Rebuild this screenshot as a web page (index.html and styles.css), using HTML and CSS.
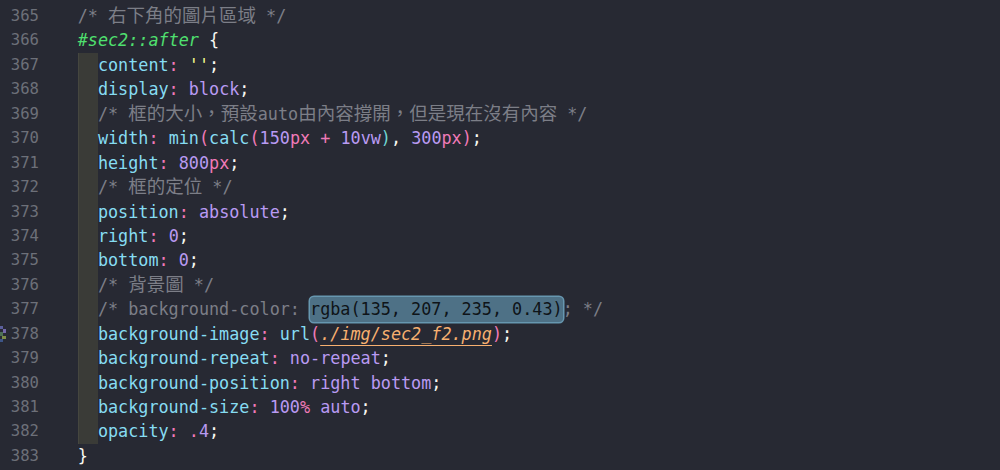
FILE: index.html
```html
<!DOCTYPE html>
<html lang="zh-Hant">
<head>
<meta charset="utf-8">
<title>styles.css</title>
<link rel="stylesheet" href="styles.css">
</head>
<body>
<div class="editor">
  <div class="gutter">
    <div class="ln">365</div>
    <div class="ln">366</div>
    <div class="ln">367</div>
    <div class="ln">368</div>
    <div class="ln">369</div>
    <div class="ln">370</div>
    <div class="ln">371</div>
    <div class="ln">372</div>
    <div class="ln">373</div>
    <div class="ln">374</div>
    <div class="ln">375</div>
    <div class="ln">376</div>
    <div class="ln">377</div>
    <div class="ln marked">
      <svg class="mark" width="6" height="20" viewBox="0 0 6 20"><rect x="0" y="2" width="3" height="3" fill="#5b5f9c"/><rect x="3" y="5" width="3" height="4" fill="#7468ac"/><rect x="0" y="8" width="3" height="4" fill="#4d6f55"/><rect x="2" y="12" width="4" height="3" fill="#7d8c48"/><rect x="0" y="15" width="3" height="3" fill="#3d5588"/></svg>
      378
    </div>
    <div class="ln">379</div>
    <div class="ln">380</div>
    <div class="ln">381</div>
    <div class="ln">382</div>
    <div class="ln">383</div>
  </div>
  <div class="code">
    <div class="line"><span class="c">/* <span class="cj">右下角的圖片區域</span> */</span></div>
    <div class="line"><span class="sel">#sec2</span><span class="o sel">::</span><span class="sel">after</span> <span class="t">{</span></div>
    <div class="block">
      <div class="guide"></div>
      <div class="lines">
        <div class="line"><span class="p">content</span><span class="o">:</span> <span class="s">''</span><span class="t">;</span></div>
        <div class="line"><span class="p">display</span><span class="o">:</span> <span class="k">block</span><span class="t">;</span></div>
        <div class="line"><span class="c">/* <span class="cj">框的大小，預設</span>auto<span class="cj">由內容撐開，但是現在沒有內容</span> */</span></div>
        <div class="line"><span class="p">width</span><span class="o">:</span> <span class="p">min</span><span class="o">(</span><span class="p">calc</span><span class="o">(</span><span class="k">150</span><span class="o">px</span> <span class="o">+</span> <span class="k">10vw</span><span class="b2">)</span><span class="t">,</span> <span class="k">300</span><span class="o">px</span><span class="o">)</span><span class="t">;</span></div>
        <div class="line"><span class="p">height</span><span class="o">:</span> <span class="k">800</span><span class="o">px</span><span class="t">;</span></div>
        <div class="line"><span class="c">/* <span class="cj">框的定位</span> */</span></div>
        <div class="line"><span class="p">position</span><span class="o">:</span> <span class="k">absolute</span><span class="t">;</span></div>
        <div class="line"><span class="p">right</span><span class="o">:</span> <span class="k">0</span><span class="t">;</span></div>
        <div class="line"><span class="p">bottom</span><span class="o">:</span> <span class="k">0</span><span class="t">;</span></div>
        <div class="line"><span class="c">/* <span class="cj">背景圖</span> */</span></div>
        <div class="line"><span class="c">/* background-color: <span class="hl">rgba(135, 207, 235, 0.43)</span>; */</span></div>
        <div class="line"><span class="p">background-image</span><span class="o">:</span> <span class="p">url</span><span class="o">(</span><span class="url">./img/sec2_f2.png</span><span class="o">)</span><span class="t">;</span></div>
        <div class="line"><span class="p">background-repeat</span><span class="o">:</span> <span class="k">no-repeat</span><span class="t">;</span></div>
        <div class="line"><span class="p">background-position</span><span class="o">:</span> <span class="k">right bottom</span><span class="t">;</span></div>
        <div class="line"><span class="p">background-size</span><span class="o">:</span> <span class="k">100</span><span class="o">%</span> <span class="k">auto</span><span class="t">;</span></div>
        <div class="line"><span class="p">opacity</span><span class="o">:</span> <span class="o">.</span><span class="k">4</span><span class="t">;</span></div>
      </div>
    </div>
    <div class="line"><span class="t">}</span></div>
  </div>
</div>
</body>
</html>
```

FILE: styles.css
```css
html, body {
  margin: 0;
  padding: 0;
  background: #272933;
}

.editor {
  display: flex;
  width: 1000px;
  height: 470px;
  overflow: hidden;
  padding-top: 4px;
  box-sizing: border-box;
  background: #272933;
  font-family: "DejaVu Sans Mono", "Liberation Mono", "Noto Sans CJK TC", monospace;
  font-size: 16.8px;
  color: #f8f8f2;
}

.gutter {
  width: 39px;
  margin-right: 38.7px;
  flex: none;
}

.ln {
  height: 24.44px;
  line-height: 24.44px;
  text-align: right;
  font-size: 15.6px;
  color: #6d7079;
  position: relative;
}

.mark {
  position: absolute;
  left: 0;
  top: 2px;
}

.code {
  flex: 1;
  min-width: 0;
}

.line {
  height: 24.44px;
  line-height: 24.44px;
  white-space: pre;
}

.block {
  display: flex;
}

.guide {
  width: 20.2px;
  flex: none;
  background: #3a3b37;
  box-shadow: inset 1px 0 0 #45463f;
}

.lines {
  flex: 1;
}

.cj {
  font-family: "Noto Sans CJK TC", sans-serif;
  font-size: 18.5px;
  line-height: 1;
}

.c { color: #7c7e87; }
.p { color: #86dcf2; }
.k { color: #b99af2; }
.o { color: #f07ab8; }
.s { color: #f1fa8c; }
.t { color: #f8f8f2; }
.b2 { color: #6fd6d2; }

.sel {
  color: #4fe06f;
  font-style: italic;
}

.url {
  color: #f7b070;
  font-style: italic;
  text-decoration: underline;
  text-decoration-skip-ink: none;
  text-underline-offset: 5px;
  text-decoration-thickness: 1px;
}

.hl {
  display: inline-block;
  height: 24.44px;
  vertical-align: top;
  background: #4e7186;
  color: #0f1418;
  border-radius: 4px;
  box-shadow: 0 0 0 1.5px #6797b0;
}
```
